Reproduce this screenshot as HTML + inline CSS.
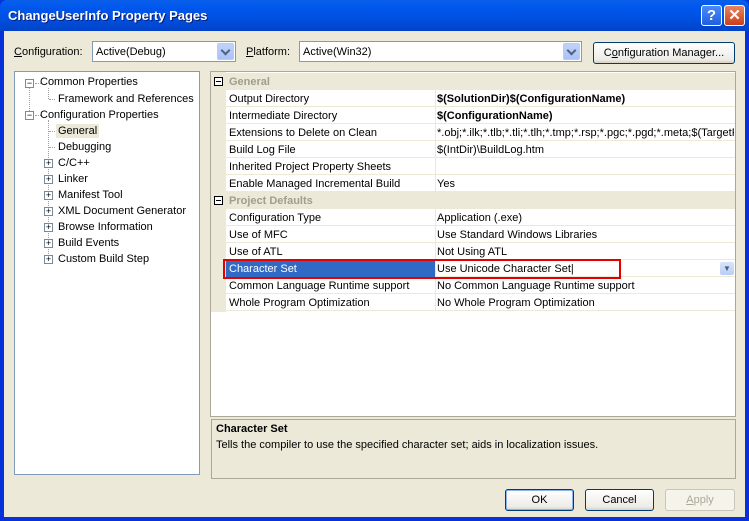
<!DOCTYPE html>
<html><head><style>
*{margin:0;padding:0;box-sizing:border-box}
body{width:749px;height:521px;overflow:hidden;font-family:"Liberation Sans",sans-serif;font-size:11px;color:#000;position:relative;background:#0831d9}
.a{position:absolute}
#tb{left:0;top:0;width:749px;height:31px;background:linear-gradient(#0a5fe8,#0058ee 20%,#0050e0 60%,#0242c8);border-radius:7px 7px 0 0}
#tt{left:8px;top:8px;color:#fff;font-weight:bold;font-size:13px;text-shadow:1px 1px #0a1e7a}
.tbtn{top:5px;width:21px;height:21px;border:1px solid #fff;border-radius:3px;color:#fff;font-weight:bold;text-align:center;font-size:15px;line-height:19px}
#body{left:4px;top:31px;width:741px;height:486px;background:#ece9d8}
.combo{height:21px;background:#fff;border:1px solid #7f9db9;padding:4px 3px}
.dd{position:absolute;right:1px;top:1px;width:17px;height:17px;background:linear-gradient(#c1d3fb,#a9c2f6);border-radius:2px;border:1px solid #b7cbf5}
.dd:after{content:"";position:absolute;left:4px;top:3px;width:5px;height:5px;border-right:2px solid #4d6185;border-bottom:2px solid #4d6185;transform:rotate(45deg)}
.btn{height:22px;border:1px solid #003c74;border-radius:3px;background:linear-gradient(#fff,#ecebe6 85%,#d6d0c5);text-align:center;line-height:20px}
.ti{position:absolute;white-space:nowrap}
.pm{position:absolute;width:9px;height:9px;border:1px solid #7a8a99;background:#fff;font-size:9px;line-height:7px;text-align:center;color:#000}
.row{position:absolute;left:226px;width:509px;height:17px;border-bottom:1px solid #ece9d8;background:#fff}
.row .n{position:absolute;left:3px;top:3px}
.row .v{position:absolute;left:211px;top:3px;white-space:nowrap;overflow:hidden;width:297px}
.row .sep{position:absolute;left:209px;top:0;width:1px;height:17px;background:#ece9d8}
.hdr{position:absolute;left:211px;width:524px;height:17px;background:#ece9d8}
.hdr b{position:absolute;left:18px;top:3px;color:#a19d8f}
.hb{position:absolute;left:3px;top:4px;width:9px;height:9px;border:1px solid #000;background:#fff}
.hb:after{content:"";position:absolute;left:1px;top:3px;width:5px;height:1px;background:#000}
.hl{position:absolute;height:0;border-top:1px dotted #a0a0a0;width:6px}
</style></head><body>
<div class="a" id="tb"></div>
<div class="a" id="tt">ChangeUserInfo Property Pages</div>
<div class="a tbtn" style="left:701px;background:linear-gradient(#4b8af8,#1f5fe0)">?</div>
<div class="a tbtn" style="left:724px;background:linear-gradient(#e88363,#c8401a)">✕</div>
<div class="a" id="body"></div>

<div class="a" style="left:14px;top:46px"><u>C</u>onfiguration:</div>
<div class="a combo" style="left:92px;top:41px;width:144px">Active(Debug)<div class="dd"></div></div>
<div class="a" style="left:246px;top:46px"><u>P</u>latform:</div>
<div class="a combo" style="left:299px;top:41px;width:283px">Active(Win32)<div class="dd"></div></div>
<div class="a btn" style="left:593px;top:42px;width:142px">C<u>o</u>nfiguration Manager...</div>

<div class="a" style="left:14px;top:71px;width:186px;height:404px;background:#fff;border:1px solid #7f9db9">
<div class="a" style="left:14px;top:16px;height:27px;border-left:1px dotted #a0a0a0"></div>
<div class="a" style="left:33px;top:48px;height:140px;border-left:1px dotted #a0a0a0"></div>
<div class="a" style="left:33px;top:16px;height:11px;border-left:1px dotted #a0a0a0"></div>
<div class="hl" style="left:20px;top:11px"></div><div class="hl" style="left:20px;top:43px"></div>
<div class="hl" style="left:34px;top:27px"></div><div class="hl" style="left:34px;top:59px"></div><div class="hl" style="left:34px;top:75px"></div>
<div class="pm" style="left:10px;top:7px">−</div><div class="ti" style="left:25px;top:4px">Common Properties</div>
<div class="ti" style="left:43px;top:21px">Framework and References</div>
<div class="pm" style="left:10px;top:39px">−</div><div class="ti" style="left:25px;top:37px">Configuration Properties</div>
<div class="ti" style="left:41px;top:52px;background:#ece9d8;padding:1px 2px">General</div>
<div class="ti" style="left:43px;top:69px">Debugging</div>
<div class="pm" style="left:29px;top:87px">+</div><div class="ti" style="left:43px;top:85px">C/C++</div>
<div class="pm" style="left:29px;top:103px">+</div><div class="ti" style="left:43px;top:101px">Linker</div>
<div class="pm" style="left:29px;top:119px">+</div><div class="ti" style="left:43px;top:117px">Manifest Tool</div>
<div class="pm" style="left:29px;top:135px">+</div><div class="ti" style="left:43px;top:133px">XML Document Generator</div>
<div class="pm" style="left:29px;top:151px">+</div><div class="ti" style="left:43px;top:149px">Browse Information</div>
<div class="pm" style="left:29px;top:167px">+</div><div class="ti" style="left:43px;top:165px">Build Events</div>
<div class="pm" style="left:29px;top:183px">+</div><div class="ti" style="left:43px;top:181px">Custom Build Step</div>
</div>

<div class="a" style="left:210px;top:71px;width:526px;height:346px;background:#fff;border:1px solid #aca899"></div>
<div class="a" style="left:211px;top:72px;width:15px;height:240px;background:#ece9d8"></div>
<div class="hdr" style="top:73px"><div class="hb"></div><b>General</b></div>
<div class="row" style="top:90px"><span class="n">Output Directory</span><span class="sep"></span><span class="v"><b>$(SolutionDir)$(ConfigurationName)</b></span></div>
<div class="row" style="top:107px"><span class="n">Intermediate Directory</span><span class="sep"></span><span class="v"><b>$(ConfigurationName)</b></span></div>
<div class="row" style="top:124px"><span class="n">Extensions to Delete on Clean</span><span class="sep"></span><span class="v">*.obj;*.ilk;*.tlb;*.tli;*.tlh;*.tmp;*.rsp;*.pgc;*.pgd;*.meta;$(TargetPath)</span></div>
<div class="row" style="top:141px"><span class="n">Build Log File</span><span class="sep"></span><span class="v">$(IntDir)\BuildLog.htm</span></div>
<div class="row" style="top:158px"><span class="n">Inherited Project Property Sheets</span><span class="sep"></span><span class="v"></span></div>
<div class="row" style="top:175px"><span class="n">Enable Managed Incremental Build</span><span class="sep"></span><span class="v">Yes</span></div>
<div class="hdr" style="top:192px"><div class="hb"></div><b>Project Defaults</b></div>
<div class="row" style="top:209px"><span class="n">Configuration Type</span><span class="sep"></span><span class="v">Application (.exe)</span></div>
<div class="row" style="top:226px"><span class="n">Use of MFC</span><span class="sep"></span><span class="v">Use Standard Windows Libraries</span></div>
<div class="row" style="top:243px"><span class="n">Use of ATL</span><span class="sep"></span><span class="v">Not Using ATL</span></div>
<div class="row" style="top:260px"><span class="a" style="left:0;top:0;width:209px;height:17px;background:#316ac5"></span><span class="n" style="color:#fff">Character Set</span><span class="sep"></span><span class="v">Use Unicode Character Set|</span><span class="a" style="left:494px;top:2px;width:14px;height:13px;background:linear-gradient(#d8e4fb,#b9cdf7);border-radius:2px;text-align:center;font-size:8px;color:#4d6185;line-height:13px">▼</span></div>
<div class="row" style="top:277px"><span class="n">Common Language Runtime support</span><span class="sep"></span><span class="v">No Common Language Runtime support</span></div>
<div class="row" style="top:294px"><span class="n">Whole Program Optimization</span><span class="sep"></span><span class="v">No Whole Program Optimization</span></div>
<div class="a" style="left:223px;top:259px;width:398px;height:20px;border:2px solid #e50000"></div>

<div class="a" style="left:211px;top:419px;width:525px;height:60px;border:1px solid #aca899"></div>
<div class="a" style="left:216px;top:423px;font-weight:bold">Character Set</div>
<div class="a" style="left:216px;top:439px">Tells the compiler to use the specified character set; aids in localization issues.</div>

<div class="a btn" style="left:505px;top:489px;width:69px;box-shadow:inset 0 0 0 1px #8eb2f0">OK</div>
<div class="a btn" style="left:585px;top:489px;width:69px">Cancel</div>
<div class="a btn" style="left:665px;top:489px;width:70px;border-color:#c9c7ba;background:#f5f4ea;color:#aca899"><u>A</u>pply</div>
</body></html>
